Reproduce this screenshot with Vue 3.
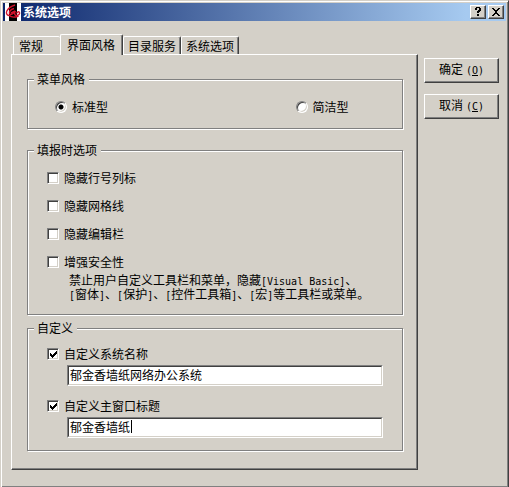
<script setup>
import { ref } from 'vue'

const tabs = ['常规', '界面风格', '目录服务', '系统选项']
const activeTab = ref(1)
const menuStyle = ref('standard')
const fillOptions = ref([
  { id: 'hide-headers', label: '隐藏行号列标', checked: false },
  { id: 'hide-grid', label: '隐藏网格线', checked: false },
  { id: 'hide-editbar', label: '隐藏编辑栏', checked: false },
  { id: 'enhance-safe', label: '增强安全性', checked: false },
])
const useName = ref(true)
const useTitle = ref(true)
const systemName = ref('郁金香墙纸网络办公系统')
const windowTitle = ref('郁金香墙纸')
</script>

<template>
  <main class="window">
    <header class="titlebar">
      <svg class="logo" viewBox="0 0 16 18" aria-hidden="true">
        <rect width="16" height="18" fill="#fff" />
        <rect x="4" width="8" height="18" fill="#000" />
        <path d="M10 2C7 3 3.500 5 1.800 8C0.500 11 2.500 13 5.500 12.500M9 5.500C6 6.500 4 8.500 4.500 10.500C5.500 12.500 8.500 11 9 8.500L6 10M10.500 8C9 10 9.500 12.500 11.500 12.500C13.500 12.500 15 11 14.500 9.500C14 8 12 8.800 11.800 10.500M4 12.500C6.500 14.500 10 14.500 13.500 13" fill="none" stroke="#d3122c" stroke-width="1.400" />
      </svg>
      <h1 class="title">系统选项</h1>
      <button class="caption-btn" type="button" aria-label="帮助">
        <svg viewBox="0 0 12 10" shape-rendering="crispEdges" aria-hidden="true">
          <path d="M4 0h4v1h1v3h-1v1h-1v1h-2v-2h1v-1h1v-2h-2v2h-2v-2h1zM5 7h2v2h-2z" />
        </svg>
      </button>
      <button class="caption-btn" type="button" aria-label="关闭">
        <svg viewBox="0 0 12 10" shape-rendering="crispEdges" aria-hidden="true">
          <path d="M2 1h2v1h1v1h2v-1h1v-1h2v1h-1v1h-1v1h-1v2h1v1h1v1h1v1h-2v-1h-1v-1h-2v1h-1v1h-2v-1h1v-1h1v-1h1v-2h-1v-1h-1v-1h-1z" />
        </svg>
      </button>
    </header>

    <div class="body">
      <section class="tabbed">
        <div class="tabs" role="tablist">
          <button
            v-for="(tab, i) in tabs"
            :key="tab"
            class="tab"
            :class="{ active: i === activeTab, before: i === activeTab - 1 }"
            type="button"
            role="tab"
            :aria-selected="i === activeTab"
            @click="activeTab = i"
          >{{ tab }}</button>
        </div>

        <div class="panel" role="tabpanel">
          <fieldset class="group">
            <legend>菜单风格</legend>
            <div class="radios">
              <label class="option">
                <input v-model="menuStyle" class="radio" type="radio" name="menu" value="standard">标准型
              </label>
              <label class="option">
                <input v-model="menuStyle" class="radio" type="radio" name="menu" value="simple">简洁型
              </label>
            </div>
          </fieldset>

          <fieldset class="group fill">
            <legend>填报时选项</legend>
            <div class="checks">
              <label v-for="opt in fillOptions" :key="opt.id" class="option">
                <input :id="opt.id" v-model="opt.checked" class="check" type="checkbox">{{ opt.label }}
              </label>
            </div>
            <p class="note">
              禁止用户自定义工具栏和菜单，隐藏<span class="latin">[Visual Basic]</span>、<br>
              <span class="latin">[</span>窗体<span class="latin">]</span>、<span class="latin">[</span>保护<span class="latin">]</span>、<span class="latin">[</span>控件工具箱<span class="latin">]</span>、<span class="latin">[</span>宏<span class="latin">]</span>等工具栏或菜单。
            </p>
          </fieldset>

          <fieldset class="group custom">
            <legend>自定义</legend>
            <div class="custom-list">
              <div class="custom-item">
                <label class="option">
                  <input v-model="useName" class="check" type="checkbox">自定义系统名称
                </label>
                <div class="field">
                  <input v-model="systemName" class="text" type="text" aria-label="自定义系统名称">
                </div>
              </div>
              <div class="custom-item">
                <label class="option">
                  <input v-model="useTitle" class="check" type="checkbox">自定义主窗口标题
                </label>
                <div class="field">
                  <input v-model="windowTitle" class="text" type="text" aria-label="自定义主窗口标题">
                  <span class="caret"></span>
                </div>
              </div>
            </div>
          </fieldset>
        </div>
      </section>

      <div class="actions">
        <button class="push" type="button">确定<span class="key">(<u>O</u>)</span></button>
        <button class="push" type="button">取消<span class="key">(<u>C</u>)</span></button>
      </div>
    </div>
  </main>
</template>

<style>
body {
  margin: 0;
  background: #d4d0c8;
}
</style>

<style scoped>
* {
  box-sizing: border-box;
}
.window {
  padding: 1px;
  background: #d4d0c8;
  border: 1px solid;
  border-color: #d4d0c8 #404040 #404040 #d4d0c8;
  box-shadow: inset 1px 1px 0 #fff, inset -1px -1px 0 #808080;
  color: #000;
  font: 12px/14px "Noto Sans CJK SC", sans-serif;
}
button,
input {
  font: inherit;
  color: inherit;
  margin: 0;
  border-radius: 0;
}
.titlebar {
  display: flex;
  align-items: center;
  gap: 2px;
  height: 18px;
  margin: 1px 1px 0;
  padding: 0 2px;
  background: linear-gradient(90deg, #0a246a, #a6caf0 92%);
}
.logo {
  width: 16px;
  height: 18px;
}
.title {
  flex: 1;
  margin: 0;
  color: #fff;
  font-size: 12px;
  line-height: 18px;
  font-weight: 700;
}
.caption-btn {
  display: flex;
  width: 16px;
  height: 14px;
  padding: 1px;
  background: #d4d0c8;
  border: 1px solid;
  border-color: #fff #404040 #404040 #fff;
  box-shadow: inset -1px -1px 0 #808080;
}
.caption-btn svg {
  width: 12px;
  height: 10px;
}
.body {
  display: flex;
  gap: 6px;
  padding: 13px 8px 16px 9px;
}
.tabbed {
  flex: 1;
  min-width: 0;
}
.tabs {
  display: flex;
  align-items: flex-end;
  padding-left: 2px;
}
.tab {
  height: 18px;
  padding: 0 4px;
  background: #d4d0c8;
  border: 1px solid;
  border-bottom: 0;
  border-color: #fff #404040 #fff #fff;
  border-radius: 2px 2px 0 0;
  box-shadow: inset -1px 0 0 #808080;
  white-space: nowrap;
}
.tab.before {
  padding: 0 17px 0 5px;
  border-right: 0;
  box-shadow: none;
}
.tab.active {
  position: relative;
  height: 21px;
  margin-bottom: -1px;
  padding: 0 7px 1px 6px;
}
.panel {
  padding: 17px 14px 18px 15px;
  border: 1px solid;
  border-color: #fff #404040 #404040 #fff;
  box-shadow: inset -1px -1px 0 #808080;
}
.group {
  min-width: 0;
  margin: 0;
  padding: 14px 19px;
  border: 1px solid #808080;
  box-shadow: 1px 1px 0 #fff, inset 1px 1px 0 #fff;
}
.group legend {
  margin-left: -13px;
  padding: 0 4px 0 3px;
  background: #d4d0c8;
}
.fill {
  margin-top: 14px;
  padding-bottom: 13px;
}
.custom {
  margin-top: 6px;
  padding: 12px 19px;
}
.radios {
  display: grid;
  grid-template-columns: 11fr 4fr;
  padding-left: 8px;
}
.checks {
  display: grid;
  gap: 14px;
}
.option {
  display: flex;
  align-items: center;
  gap: 5px;
}
.radio,
.check {
  flex: none;
  appearance: none;
  width: 12px;
  height: 12px;
  background-color: #fff;
  border: 1px solid;
  border-color: #808080 #fff #fff #808080;
  box-shadow: inset 1px 1px 0 #404040, inset -1px -1px 0 #d4d0c8;
}
.radio {
  border-radius: 50%;
}
.radio:checked {
  background-image: radial-gradient(circle, #000 2px, transparent 3px);
}
.check:checked {
  background-image: url("data:image/svg+xml,%3Csvg xmlns='http://www.w3.org/2000/svg' viewBox='0 0 10 10' shape-rendering='crispEdges'%3E%3Cpath d='M2 4h1v1h1v1h1v-1h1v-1h1v-1h1v-1h1v3h-1v1h-1v1h-1v1h-1v1h-1v-1h-1v-1h-1z'/%3E%3C/svg%3E");
}
.note {
  margin: 4px 0 0 22px;
  white-space: nowrap;
}
.latin {
  font-family: "DejaVu Sans Mono", monospace;
  font-size: 10px;
  line-height: 0;
}
.custom-list {
  display: grid;
  gap: 13px;
}
.custom-item {
  display: grid;
  gap: 4px;
}
.field {
  position: relative;
  height: 21px;
  margin-left: 20px;
  border: 1px solid;
  border-color: #808080 #fff #fff #808080;
}
.text {
  display: block;
  width: 100%;
  height: 19px;
  padding: 0 1px 3px;
  background: #fff;
  border: 1px solid;
  border-color: #404040 #d4d0c8 #d4d0c8 #404040;
  outline: 0;
}
.caret {
  position: absolute;
  top: 2px;
  left: 63px;
  width: 1px;
  height: 13px;
  background: #000;
}
.actions {
  display: flex;
  flex-direction: column;
  gap: 11px;
  width: 75px;
  padding-top: 24px;
}
.push {
  height: 25px;
  padding: 0 0 2px;
  background: #d4d0c8;
  border: 1px solid;
  border-color: #fff #404040 #404040 #fff;
  box-shadow: inset -1px -1px 0 #808080;
}
.key {
  margin-left: 3px;
  font-family: "DejaVu Sans Mono", monospace;
  font-size: 10px;
}
</style>
